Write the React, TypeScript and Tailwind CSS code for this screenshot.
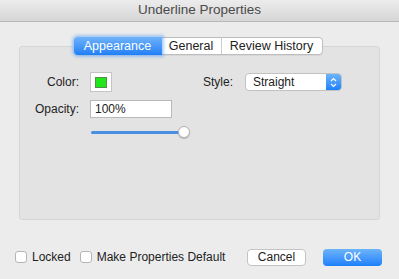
import React from "react";

const Checkbox = ({label}: {label: string}) => (
    <label className="flex items-center">
        <span className="w-[12px] h-[12px] rounded-[3px] border border-[#b5b5b5] bg-white"/>
        <span className="ml-[5px]">{label}</span>
    </label>
);

export default function App() {
    return (
        <div className="w-[399px] h-[279px] bg-[#ececec] text-[12px] text-[#222] flex flex-col" style={{fontFamily: "'Liberation Sans', Arial, sans-serif"}}>
            <div className="h-[22px] shrink-0 flex items-center justify-center text-[13.5px] text-[#4a4a4a] bg-gradient-to-b from-[#ececec] to-[#d6d6d6] border-b border-[#b9b9b9]">
                Underline Properties
            </div>
            <div className="relative px-[19px] pt-[24px]">
                <div className="h-[174px] bg-[#e3e3e3] border border-[#d6d6d6] rounded-[3px] pl-[14px] pt-[25px]">
                    <div className="flex items-center">
                        <span className="w-[45px] text-right">Color:</span>
                        <div className="ml-[11px] w-[22px] h-[20px] bg-white border border-[#c4c4c4] flex items-center justify-center">
                            <div className="w-[12px] h-[11px] bg-[#22e51c] border border-[#4f8f4a]"/>
                        </div>
                        <span className="ml-[91px]">Style:</span>
                        <div className="ml-[12px] w-[97px] h-[18px] bg-white border border-[#c2c2c2] rounded-[4px] flex items-center overflow-hidden">
                            <span className="flex-1 pl-[7px] text-[12px]">Straight</span>
                            <div className="w-[15px] h-full bg-gradient-to-b from-[#6cb3fa] to-[#1a82fb] flex items-center justify-center">
                                <svg width="7" height="11" viewBox="0 0 7 11" fill="none" stroke="white" strokeWidth="1.2">
                                    <path d="M1 4 L3.5 1.5 L6 4"/>
                                    <path d="M1 7 L3.5 9.5 L6 7"/>
                                </svg>
                            </div>
                        </div>
                    </div>
                    <div className="flex items-center mt-[8px]">
                        <span className="w-[45px] text-right">Opacity:</span>
                        <div className="ml-[11px] w-[82px] h-[18px] bg-white border border-[#b9b9b9] flex items-center pl-[4px]">
                            100%
                        </div>
                    </div>
                    <div className="ml-[57px] mt-[8px] w-[100px] h-[12px] flex items-center relative">
                        <div className="h-[3px] w-[90px] rounded-full bg-[#4a90e2]"/>
                        <div className="absolute left-[87px] w-[12px] h-[12px] rounded-full bg-white border border-[#b0b0b0] shadow-[0_1px_1px_rgba(0,0,0,0.2)]"/>
                    </div>
                </div>
                <div className="absolute top-[15px] left-0 right-0 flex justify-center pr-[3px]">
                    <div className="flex h-[18px] border border-[#bdbdbd] rounded-[4px] bg-white overflow-visible shadow-[0_1px_0_rgba(0,0,0,0.05)]">
                        <div className="w-[88px] -my-px -ml-px flex items-center justify-center text-white bg-gradient-to-b from-[#6eb2f9] to-[#1e7ff6] rounded-l-[4px] shadow-[0_0_3px_2px_rgba(90,160,245,0.5)] text-[12.5px]">Appearance</div>
                        <div className="w-[60px] flex items-center justify-center border-r border-[#cfcfcf] text-[12.5px]">General</div>
                        <div className="w-[100px] flex items-center justify-center text-[12.5px]">Review History</div>
                    </div>
                </div>
            </div>
            <div className="flex items-center px-[15px] mt-[28px]">
                <Checkbox label="Locked"/>
                <div className="ml-[9px]"><Checkbox label="Make Properties Default"/></div>
                <button className="ml-auto w-[59px] h-[17px] bg-white border border-[#c3c3c3] rounded-[4px] flex items-center justify-center text-[12px]">Cancel</button>
                <button className="ml-[17px] mr-[2px] w-[59px] h-[17px] rounded-[4px] bg-gradient-to-b from-[#6cb3fa] to-[#1a80fb] text-white flex items-center justify-center text-[12px]">OK</button>
            </div>
        </div>
    );
}
